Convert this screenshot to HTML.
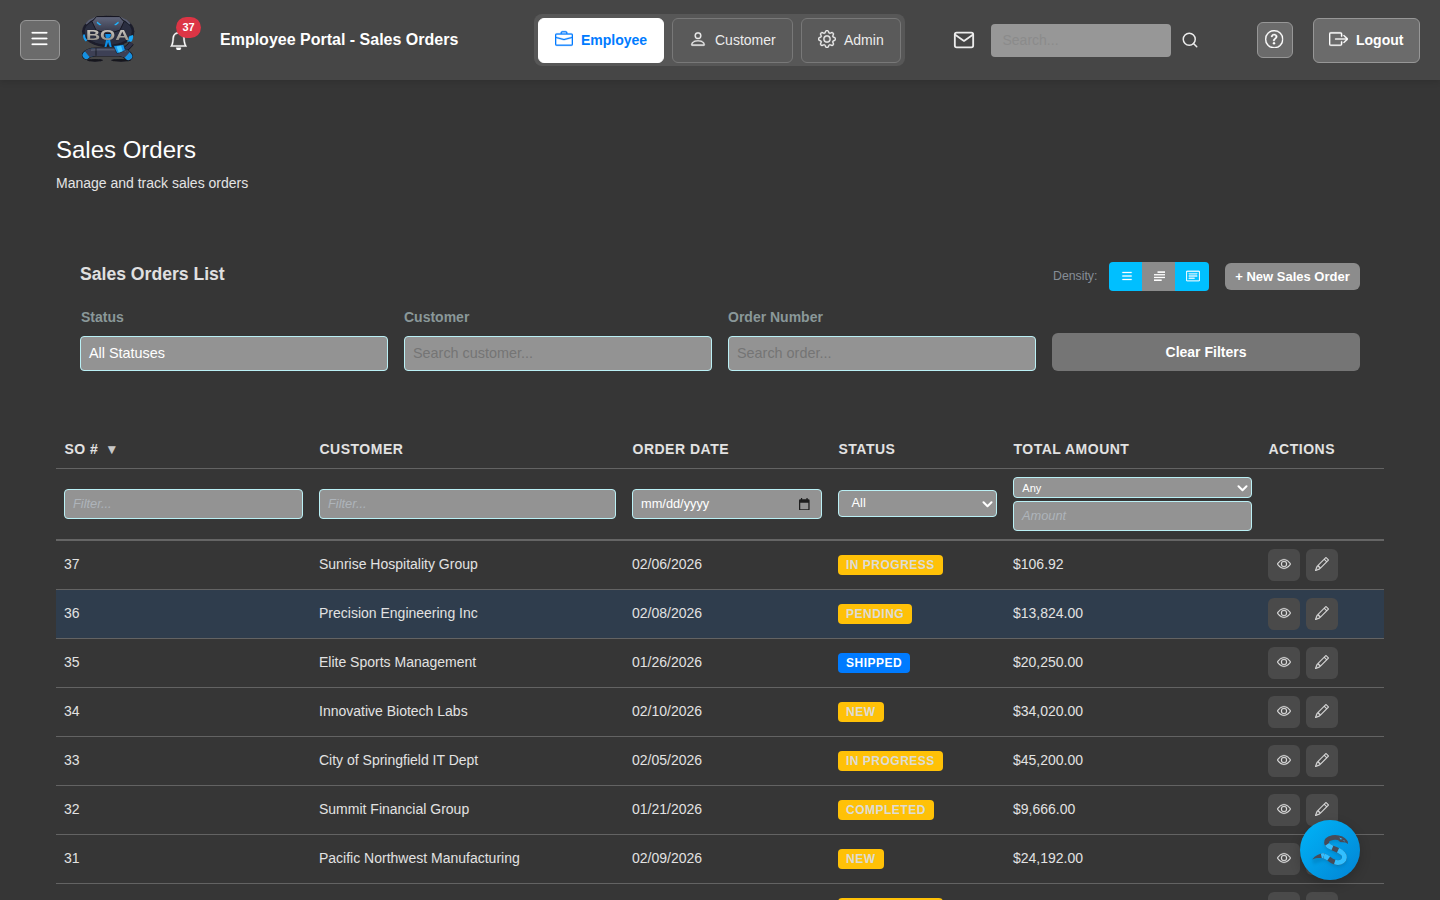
<!DOCTYPE html>
<html lang="en">
<head>
<meta charset="utf-8">
<title>Employee Portal - Sales Orders</title>
<style>
*{box-sizing:border-box;margin:0;padding:0}
html,body{width:1440px;height:900px;overflow:hidden}
body{background:#363636;color:#e8e8e8;font-family:"Liberation Sans",Arial,sans-serif;font-size:14px;position:relative}
.abs{position:absolute}
/* header */
#hdr{position:absolute;left:0;top:0;width:1440px;height:80px;background:#464646;box-shadow:0 2px 6px rgba(0,0,0,.12)}
#menu{left:20px;top:20px;width:40px;height:40px;background:#6b6b6b;border:1px solid #979797;border-radius:6px}

#title{left:220px;top:30px;font-size:16px;font-weight:700;color:#fff;line-height:20px;white-space:nowrap}
#badge{left:176px;top:17px;width:25px;height:21px;border-radius:11px;background:#dc3545;color:#fff;font-size:11px;font-weight:700;text-align:center;line-height:21px}
#tabs{left:534px;top:14px;width:371px;height:52px;background:#575757;border-radius:8px}
.tab{position:absolute;top:4px;height:45px;border:1px solid #787878;border-radius:6px;background:#5a5a5a;color:#ececec;font-size:14px;line-height:43px;white-space:nowrap}
.tab span{position:absolute;top:0}
.tab svg{position:absolute}
#t1{left:4px;width:126px;background:#fff;border-color:#fff;color:#007bff;font-weight:700}
#t2{left:138px;width:121px}
#t3{left:267px;width:100px}
#search{left:991px;top:24px;width:180px;height:33px;background:#979797;border-radius:4px;color:#8b8b8b;font-size:14px;line-height:33px;padding-left:11.500px}
#help{left:1257px;top:22px;width:36px;height:36px;background:#6b6b6b;border:1px solid #979797;border-radius:6px}
#logout{left:1313px;top:18px;width:107px;height:45px;background:#6b6b6b;border:1px solid #979797;border-radius:6px;color:#fff;font-weight:700;font-size:14px;line-height:43px}
#logout span{position:absolute;left:42px;top:0}
/* page */
h1{position:absolute;left:56px;top:134px;font-size:24px;font-weight:400;color:#fff;line-height:32px;white-space:nowrap}
#sub{left:56px;top:174px;font-size:14px;color:#e4e4e4;line-height:18px;white-space:nowrap}
h2{position:absolute;left:80px;top:263px;font-size:17.6px;font-weight:700;color:#e0e0e0;line-height:22px;white-space:nowrap}
#dens{left:1053px;top:268px;font-size:12.3px;color:#868e96;line-height:16px}
#dgrp{left:1109px;top:262px;width:100px;height:29px;border-radius:4px;overflow:hidden;background:#00bfff}
#dgrp b{position:absolute;left:33px;top:0;width:33px;height:29px;background:#8c8c8c}
#new{left:1225px;top:263px;width:135px;height:27px;background:#8c8c8c;border-radius:6px;color:#fff;font-weight:700;font-size:13px;line-height:27px;text-align:center;white-space:nowrap}
.lbl{position:absolute;top:308px;font-size:14px;font-weight:700;color:#8a9899;line-height:18px}
.inp{position:absolute;top:336px;width:308px;height:35px;background:#939393;border:1px solid #baf0f5;border-radius:4px;font-size:14.4px;line-height:32px;padding-left:8px;color:#757575;white-space:nowrap}
#clear{left:1052px;top:333px;width:308px;height:38px;background:#757575;border-radius:6px;color:#fff;font-weight:700;font-size:14px;line-height:38px;text-align:center}
/* table */
table{position:absolute;left:56px;top:430px;width:1328px;border-collapse:separate;border-spacing:0;table-layout:fixed}
th{height:39px;text-align:left;padding:0 8.5px 1px;font-size:14px;font-weight:700;letter-spacing:.5px;color:#e2e2e2;text-transform:uppercase;border-bottom:1px solid #636363;white-space:nowrap}
td{height:49px;padding:0 8px;font-size:14px;color:#e2e2e2;border-bottom:1px solid #636363;white-space:nowrap;vertical-align:top;line-height:47px}
tr.f td{height:72px;border-bottom:2px solid #656565;position:relative;padding:0}
tr.h td{background:#2f3d4d}
.fi{position:absolute;left:8px;right:8px;top:20px;height:30px;background:#939393;border:1px solid #baf0f5;border-radius:4px;font-size:12.8px;line-height:27px;padding-left:8px;color:#aeb4ba;font-style:italic}
.fi.n{font-style:normal;color:#fff}
.bdg{display:inline-block;height:20px;line-height:20px;padding:0 8px;border-radius:4px;font-size:12px;font-weight:700;letter-spacing:.5px;background:#ffc107;color:#dcdcd6;vertical-align:top;margin-top:14px}
.bdg.s{background:#007bff;color:#fff}
.act{display:inline-block;width:32px;height:32px;border-radius:6px;background:#4a4a4a;vertical-align:top;margin:8px 6px 0 0;position:relative}
.act svg{position:absolute;left:9px;top:8px}
#fab{left:1300px;top:820px;width:60px;height:60px;border-radius:50%;background:linear-gradient(135deg,#00b4f8,#0284d4);box-shadow:0 4px 12px rgba(0,0,0,.2)}
</style>
</head>
<body>
<svg width="0" height="0" style="position:absolute"><defs><symbol id="i-list" viewBox="0 0 16 16"><path fill-rule="evenodd" d="M2.5 12a.5.5 0 0 1 .5-.5h10a.5.5 0 0 1 0 1H3a.5.5 0 0 1-.5-.5m0-4a.5.5 0 0 1 .5-.5h10a.5.5 0 0 1 0 1H3a.5.5 0 0 1-.5-.5m0-4a.5.5 0 0 1 .5-.5h10a.5.5 0 0 1 0 1H3a.5.5 0 0 1-.5-.5"/></symbol><symbol id="i-bell" viewBox="0 0 16 16"><path d="M8 16a2 2 0 0 0 2-2H6a2 2 0 0 0 2 2M8 1.918l-.797.161A4 4 0 0 0 4 6c0 .628-.134 2.197-.459 3.742-.16.767-.376 1.566-.663 2.258h10.244c-.287-.692-.502-1.49-.663-2.258C12.134 8.197 12 6.628 12 6a4 4 0 0 0-3.203-3.92zM14.22 12c.223.447.481.801.78 1H1c.299-.199.557-.553.78-1C2.68 10.2 3 6.88 3 6c0-2.42 1.72-4.44 4.005-4.901a1 1 0 1 1 1.99 0A5 5 0 0 1 13 6c0 .88.32 4.2 1.22 6"/></symbol><symbol id="i-briefcase" viewBox="0 0 16 16"><path d="M6.5 1A1.5 1.5 0 0 0 5 2.5V3H1.5A1.5 1.5 0 0 0 0 4.5v8A1.5 1.5 0 0 0 1.5 14h13a1.5 1.5 0 0 0 1.5-1.5v-8A1.5 1.5 0 0 0 14.5 3H11v-.5A1.5 1.5 0 0 0 9.5 1zm0 1h3a.5.5 0 0 1 .5.5V3H6v-.5a.5.5 0 0 1 .5-.5m1.886 6.914L15 7.151V12.5a.5.5 0 0 1-.5.5h-13a.5.5 0 0 1-.5-.5V7.15l6.614 1.764a1.5 1.5 0 0 0 .772 0M1.5 4h13a.5.5 0 0 1 .5.5v1.616L8.129 7.948a.5.5 0 0 1-.258 0L1 6.116V4.5a.5.5 0 0 1 .5-.5"/></symbol><symbol id="i-person" viewBox="0 0 16 16"><path d="M8 8a3 3 0 1 0 0-6 3 3 0 0 0 0 6m2-3a2 2 0 1 1-4 0 2 2 0 0 1 4 0m4 8c0 1-1 1-1 1H3s-1 0-1-1 1-4 6-4 6 3 6 4m-1-.004c-.001-.246-.154-.986-.832-1.664C11.516 10.68 10.289 10 8 10s-3.516.68-4.168 1.332c-.678.678-.83 1.418-.832 1.664z"/></symbol><symbol id="i-gear" viewBox="0 0 16 16"><path d="M8 4.754a3.246 3.246 0 1 0 0 6.492 3.246 3.246 0 0 0 0-6.492M5.754 8a2.246 2.246 0 1 1 4.492 0 2.246 2.246 0 0 1-4.492 0"/><path d="M9.796 1.343c-.527-1.79-3.065-1.79-3.592 0l-.094.319a.873.873 0 0 1-1.255.52l-.292-.16c-1.64-.892-3.433.902-2.54 2.541l.159.292a.873.873 0 0 1-.52 1.255l-.319.094c-1.79.527-1.79 3.065 0 3.592l.319.094a.873.873 0 0 1 .52 1.255l-.16.292c-.892 1.64.901 3.434 2.541 2.54l.292-.159a.873.873 0 0 1 1.255.52l.094.319c.527 1.79 3.065 1.79 3.592 0l.094-.319a.873.873 0 0 1 1.255-.52l.292.16c1.64.893 3.434-.902 2.54-2.541l-.159-.292a.873.873 0 0 1 .52-1.255l.319-.094c1.79-.527 1.79-3.065 0-3.592l-.319-.094a.873.873 0 0 1-.52-1.255l.16-.292c.893-1.64-.902-3.433-2.541-2.54l-.292.159a.873.873 0 0 1-1.255-.52zm-2.633.283c.246-.835 1.428-.835 1.674 0l.094.319a1.873 1.873 0 0 0 2.693 1.115l.291-.16c.764-.415 1.6.42 1.184 1.185l-.159.292a1.873 1.873 0 0 0 1.116 2.692l.318.094c.835.246.835 1.428 0 1.674l-.319.094a1.873 1.873 0 0 0-1.115 2.693l.16.291c.415.764-.42 1.6-1.185 1.184l-.291-.159a1.873 1.873 0 0 0-2.693 1.116l-.094.318c-.246.835-1.428.835-1.674 0l-.094-.319a1.873 1.873 0 0 0-2.692-1.115l-.292.16c-.764.415-1.6-.42-1.184-1.185l.159-.291A1.873 1.873 0 0 0 1.945 8.93l-.319-.094c-.835-.246-.835-1.428 0-1.674l.319-.094A1.873 1.873 0 0 0 3.06 4.377l-.16-.292c-.415-.764.42-1.6 1.185-1.184l.292.159a1.873 1.873 0 0 0 2.692-1.115z"/></symbol><symbol id="i-envelope" viewBox="0 0 16 16"><path d="M0 4a2 2 0 0 1 2-2h12a2 2 0 0 1 2 2v8a2 2 0 0 1-2 2H2a2 2 0 0 1-2-2zm2-1a1 1 0 0 0-1 1v.217l7 4.2 7-4.2V4a1 1 0 0 0-1-1zm13 2.383-4.708 2.825L15 11.105zm-.034 6.876-5.64-3.471L8 9.583l-1.326-.795-5.64 3.47A1 1 0 0 0 2 13h12a1 1 0 0 0 .966-.741M1 11.105l4.708-2.897L1 5.383z"/></symbol><symbol id="i-search" viewBox="0 0 16 16"><path d="M11.742 10.344a6.5 6.5 0 1 0-1.397 1.398h-.001q.044.06.098.115l3.85 3.85a1 1 0 0 0 1.415-1.414l-3.85-3.85a1 1 0 0 0-.115-.1zM12 6.5a5.5 5.5 0 1 1-11 0 5.5 5.5 0 0 1 11 0"/></symbol><symbol id="i-question" viewBox="0 0 16 16"><path d="M8 15A7 7 0 1 1 8 1a7 7 0 0 1 0 14m0 1A8 8 0 1 0 8 0a8 8 0 0 0 0 16"/><path d="M5.255 5.786a.237.237 0 0 0 .241.247h.825c.138 0 .248-.113.266-.25.09-.656.54-1.134 1.342-1.134.686 0 1.314.343 1.314 1.168 0 .635-.374.927-.965 1.371-.673.489-1.206 1.06-1.168 1.987l.003.217a.25.25 0 0 0 .25.246h.811a.25.25 0 0 0 .25-.25v-.105c0-.718.273-.927 1.01-1.486.609-.463 1.244-.977 1.244-2.056 0-1.511-1.276-2.241-2.673-2.241-1.267 0-2.655.59-2.75 2.286m1.557 5.763c0 .533.425.927 1.01.927.609 0 1.028-.394 1.028-.927 0-.552-.42-.94-1.029-.94-.584 0-1.009.388-1.009.94"/></symbol><symbol id="i-eye" viewBox="0 0 16 16"><path d="M16 8s-3-5.500-8-5.500S0 8 0 8s3 5.500 8 5.500S16 8 16 8M1.173 8a13 13 0 0 1 1.660-2.043C4.120 4.668 5.880 3.500 8 3.500s3.879 1.168 5.168 2.457A13 13 0 0 1 14.828 8q-.086.130-.195.288c-.335.480-.830 1.120-1.465 1.755C11.879 11.332 10.119 12.500 8 12.500s-3.879-1.168-5.168-2.457A13 13 0 0 1 1.172 8z"/><path d="M8 5.500a2.500 2.500 0 1 0 0 5 2.500 2.500 0 0 0 0-5M4.500 8a3.500 3.500 0 1 1 7 0 3.500 3.500 0 0 1-7 0"/></symbol><symbol id="i-pencil" viewBox="0 0 16 16"><path d="M12.146.146a.5.5 0 0 1 .708 0l3 3a.5.5 0 0 1 0 .708l-10 10a.5.5 0 0 1-.168.110l-5 2a.5.5 0 0 1-.650-.650l2-5a.5.5 0 0 1 .110-.168zM11.207 2.500 13.500 4.793 14.793 3.500 12.500 1.207zm1.586 3L10.500 3.207 4 9.707V10h.5a.5.5 0 0 1 .5.5v.5h.5a.5.5 0 0 1 .5.5v.5h.293zm-9.761 5.175-.106.106-1.528 3.821 3.821-1.528.106-.106A.5.5 0 0 1 5 12.500V12h-.5a.5.5 0 0 1-.5-.5V11h-.5a.5.5 0 0 1-.468-.325"/></symbol><symbol id="i-card" viewBox="0 0 16 16"><path d="M14.500 3a.5.5 0 0 1 .5.5v9a.5.5 0 0 1-.5.5h-13a.5.5 0 0 1-.5-.5v-9a.5.5 0 0 1 .5-.5zm-13-1A1.500 1.500 0 0 0 0 3.500v9A1.500 1.500 0 0 0 1.500 14h13a1.500 1.500 0 0 0 1.500-1.500v-9A1.500 1.500 0 0 0 14.500 2z"/><path d="M3 5.500a.5.5 0 0 1 .5-.5h9a.5.5 0 0 1 0 1h-9a.5.5 0 0 1-.5-.5M3 8a.5.5 0 0 1 .5-.5h9a.5.5 0 0 1 0 1h-9A.5.5 0 0 1 3 8m0 2.500a.5.5 0 0 1 .5-.5h6a.5.5 0 0 1 0 1h-6a.5.5 0 0 1-.5-.5"/></symbol></defs></svg>
<div id="hdr">
  <div id="menu" class="abs"><svg class="abs" style="left:7px;top:6px;" width="23" height="23" fill="#fff" stroke="#fff" stroke-width=".2"><use href="#i-list"/></svg></div>
  <svg id="logo" class="abs" style="left:78px;top:12px" width="60" height="54" viewBox="78 12 60 54">
<defs>
<linearGradient id="lg1" x1="0" y1="0" x2="0" y2="1"><stop offset="0" stop-color="#62677c"/><stop offset="1" stop-color="#303344"/></linearGradient>
<linearGradient id="lg2" x1="0" y1="0" x2="0" y2="1"><stop offset="0" stop-color="#d6d3ce"/><stop offset=".5" stop-color="#b4b0a9"/><stop offset="1" stop-color="#85817b"/></linearGradient>
<filter id="lb" x="-20%" y="-20%" width="140%" height="140%"><feGaussianBlur stdDeviation=".45"/></filter>
</defs>
<g filter="url(#lb)">
<ellipse cx="95" cy="60.300" rx="8" ry="1.400" fill="#14151f"/>
<ellipse cx="121" cy="60.300" rx="10" ry="1.400" fill="#14151f"/>
<ellipse cx="108.200" cy="31.400" rx="26.200" ry="15.700" fill="#1b1d2b"/>
<ellipse cx="108.200" cy="31.400" rx="23.500" ry="13.300" fill="#2c2f40"/>
<path d="M86 24c3-3.500 7-5.500 10-6.500M130 24c-3-3.500-7-5.500-10-6.500" stroke="#5a5e72" stroke-width="1.600" fill="none"/>
<path d="M96.500 16.600h23l4.500 5-4 8.500-12 3.800-12-3.800-4-8.500z" fill="url(#lg1)" stroke="#15161f" stroke-width="1"/>
<path d="M97.200 21.600l4.300 3.300-2 .4-2.800-2.200z" fill="#21b4ff"/>
<path d="M118.300 21.600l-4.300 3.300 2 .4 2.800-2.200z" fill="#21b4ff"/>
<path d="M83.200 34.500c-.6 2.300.4 5 2.600 7l1.600-1.300c-1.700-1.700-2.500-3.900-2.200-5.700z" fill="#1a9cf0"/>
<path d="M129.500 36l3.500-1c.5 2.400-.2 5-1.700 6.800l-4.300-.4z" fill="#19a8f8"/>
<path d="M105.300 34h5.600l-.7 6.500 1.500 6.500h-1.900l-1.700-5-1.700 5h-1.900l1.500-6.500z" fill="#0f8fe8"/>
<path d="M119 52c5-1.500 9.500-4.500 12.500-9" stroke="#15161f" stroke-width="5.400" fill="none"/>
<path d="M119 52c5-1.500 9.500-4.500 12.500-9" stroke="#30334a" stroke-width="4" fill="none"/>
<path d="M86.400 55.200Q89 52 96 52L119 52Q125.500 52.300 128.400 56.200" stroke="#15161f" stroke-width="9" stroke-linecap="round" fill="none"/>
<path d="M86.400 55.200Q89 52 96 52L119 52Q125.500 52.300 128.400 56.200" stroke="#1790e0" stroke-width="7.600" stroke-linecap="round" fill="none"/>
<path d="M86.400 55.200Q89 52 96 52L119 52Q125.500 52.300 128.400 56.200" pathLength="100" stroke-dasharray="0 3 93 4" stroke="#3c4054" stroke-width="7.800" fill="none"/>
<path d="M91 50.200Q93.500 49.700 96 49.700L119 49.700Q123 49.800 126 51.200" stroke="#555a6e" stroke-width="1.500" fill="none"/>
<path d="M113.400 45.800l10.200-1.400 1.800 6-8.400 3.200z" fill="#1496ee" stroke="#15161f" stroke-width=".6"/>
<path d="M116.500 46.600l4.600-.8 1.600 5.400-4 1.500z" fill="#45c6ff"/>
<path d="M96 48.200v7.600" stroke="#15161f" stroke-width=".8"/>
</g>
<text x="107.700" y="39.900" text-anchor="middle" textLength="43.500" lengthAdjust="spacingAndGlyphs" font-family="'Liberation Sans',Arial,sans-serif" font-weight="700" font-size="15" fill="url(#lg2)" stroke="#2a2a30" stroke-width=".35" paint-order="stroke" filter="url(#lb)">BOA</text>
</svg>
  <svg class="abs" style="left:168.7px;top:30.7px;" width="19.2" height="19.2" fill="#fff" stroke="#fff" stroke-width=".35"><use href="#i-bell"/></svg>
  <div id="badge" class="abs">37</div>
  <div id="title" class="abs">Employee Portal - Sales Orders</div>
  <div id="tabs" class="abs">
    <div class="tab" id="t1"><svg class="abs" style="left:16px;top:10.500px;" width="18" height="18" fill="#007bff" stroke="#007bff" stroke-width=".3"><use href="#i-briefcase"/></svg><span style="left:42px">Employee</span></div>
    <div class="tab" id="t2"><svg class="abs" style="left:16.300px;top:10.500px;" width="18" height="18" fill="#ececec" stroke="#ececec" stroke-width=".3"><use href="#i-person"/></svg><span style="left:42px">Customer</span></div>
    <div class="tab" id="t3"><svg class="abs" style="left:16px;top:10.500px;" width="18" height="18" fill="#ececec" stroke="#ececec" stroke-width=".3"><use href="#i-gear"/></svg><span style="left:42px">Admin</span></div>
  </div>
  <svg class="abs" style="left:953px;top:29px" width="22" height="22" viewBox="0 0 24 24" fill="none" stroke="#ececec" stroke-width="2" stroke-linecap="round" stroke-linejoin="round"><path d="M4 4h16c1.100 0 2 .9 2 2v12c0 1.100-.9 2-2 2H4c-1.100 0-2-.9-2-2V6c0-1.100.9-2 2-2z"/><polyline points="22,6 12,13 2,6"/></svg>
  <div id="search" class="abs">Search...</div>
  <svg class="abs" style="left:1181px;top:31px" width="18" height="18" viewBox="0 0 24 24" fill="none" stroke="#ececec" stroke-width="2" stroke-linecap="round" stroke-linejoin="round"><circle cx="11" cy="11" r="8"/><line x1="21" y1="21" x2="16.650" y2="16.650"/></svg>
  <div id="help" class="abs"><svg class="abs" style="left:7.300px;top:7px;" width="18.400" height="18.400" fill="#fff" stroke="#fff" stroke-width=".3"><use href="#i-question"/></svg></div>
  <div id="logout" class="abs"><svg class="abs" style="left:14.800px;top:11px;" width="19.200" height="18" viewBox="0 0 16 16" preserveAspectRatio="none" fill="#fff" stroke="#fff" stroke-width=".3"><path fill-rule="evenodd" d="M10 12.5a.5.5 0 0 1-.5.5h-8a.5.5 0 0 1-.5-.5v-9a.5.5 0 0 1 .5-.5h8a.5.5 0 0 1 .5.5v2a.5.5 0 0 0 1 0v-2A1.5 1.5 0 0 0 9.500 2h-8A1.500 1.500 0 0 0 0 3.500v9A1.500 1.500 0 0 0 1.500 14h8a1.500 1.500 0 0 0 1.500-1.500v-2a.5.5 0 0 0-1 0z"/><path fill-rule="evenodd" d="M15.854 8.354a.5.5 0 0 0 0-.708l-3-3a.5.5 0 0 0-.708.708L14.293 7.500H5.500a.5.5 0 0 0 0 1h8.793l-2.147 2.146a.5.5 0 0 0 .708.708z"/></svg><span>Logout</span></div>
</div>
<h1>Sales Orders</h1>
<div id="sub" class="abs">Manage and track sales orders</div>
<h2>Sales Orders List</h2>
<div id="dens" class="abs">Density:</div>
<div id="dgrp" class="abs"><b></b><svg class="abs" style="left:11px;top:7px" width="14" height="14" fill="#fff" stroke="#fff" stroke-width=".35"><use href="#i-list"/></svg><svg class="abs" style="left:44px;top:8px" width="14" height="14" viewBox="44 8 14 14" fill="#fff"><rect x="48.500" y="9.300" width="7.500" height="1.600"/><rect x="45" y="12.100" width="11" height="1.300"/><rect x="45" y="14.800" width="11" height="1.300"/><rect x="45" y="17.400" width="7.700" height="1.600"/></svg><svg class="abs" style="left:77px;top:7px" width="14" height="14" fill="#fff" stroke="#fff" stroke-width=".3"><use href="#i-card"/></svg></div>
<div id="new" class="abs">+ New Sales Order</div>
<div class="lbl" style="left:81px">Status</div>
<div class="lbl" style="left:404px">Customer</div>
<div class="lbl" style="left:728px">Order Number</div>
<div class="inp" style="left:80px;color:#fff">All Statuses</div>
<div class="inp" style="left:404px">Search customer...</div>
<div class="inp" style="left:728px">Search order...</div>
<div id="clear" class="abs">Clear Filters</div>
<table>
<colgroup><col style="width:255px"><col style="width:313px"><col style="width:206px"><col style="width:175px"><col style="width:255px"><col style="width:124px"></colgroup>
<thead>
<tr><th>SO # <span style="font-family:'DejaVu Sans',sans-serif;font-size:10.5px;margin-left:5px;color:#c8c8c8;letter-spacing:0;position:relative;top:-.5px">▼</span></th><th>Customer</th><th>Order Date</th><th>Status</th><th>Total Amount</th><th>Actions</th></tr>
</thead>
<tbody>
<tr class="f"><td><div class="fi">Filter...</div></td><td><div class="fi">Filter...</div></td><td><div class="fi n">mm/dd/yyyy<svg class="abs" style="left:166.300px;top:7.800px" width="10.600" height="12.400" viewBox="0 0 11 13" preserveAspectRatio="none" fill="#1e1e1e"><path d="M2 0h1.300v1.300h4.400V0H9v1.300h.8A1.200 1.200 0 0 1 11 2.500v9.300A1.200 1.200 0 0 1 9.800 13H1.200A1.200 1.200 0 0 1 0 11.800V2.500a1.200 1.200 0 0 1 1.200-1.200H2zM1.300 5v6.700h8.400V5z"/></svg></div></td><td><div class="fi n" style="height:27px;line-height:24px;padding-left:12.5px;top:21px">All<svg class="abs" style="right:3px;top:9.5px" width="11" height="7" viewBox="0 0 11 7" fill="none" stroke="#fff" stroke-width="2" stroke-linecap="round" stroke-linejoin="round"><path d="M1.500 1.300 5.500 5.300 9.500 1.300"/></svg></div></td><td><div class="fi n" style="height:21px;line-height:21px;font-size:11px;padding-left:8.300px;top:8px">Any<svg class="abs" style="right:3px;top:6.5px" width="11" height="7" viewBox="0 0 11 7" fill="none" stroke="#fff" stroke-width="2" stroke-linecap="round" stroke-linejoin="round"><path d="M1.500 1.300 5.500 5.300 9.500 1.300"/></svg></div><div class="fi" style="top:32px">Amount</div></td><td></td></tr>
<tr><td>37</td><td>Sunrise Hospitality Group</td><td>02/06/2026</td><td><span class="bdg">IN PROGRESS</span></td><td>$106.92</td><td><span class="act"><svg width="14" height="14" fill="#e4e4e4" stroke="#e4e4e4" stroke-width=".3"><use href="#i-eye"/></svg></span><span class="act"><svg width="14" height="14" fill="#e4e4e4" stroke="#e4e4e4" stroke-width=".3"><use href="#i-pencil"/></svg></span></td></tr>
<tr class="h"><td>36</td><td>Precision Engineering Inc</td><td>02/08/2026</td><td><span class="bdg">PENDING</span></td><td>$13,824.00</td><td><span class="act"><svg width="14" height="14" fill="#e4e4e4" stroke="#e4e4e4" stroke-width=".3"><use href="#i-eye"/></svg></span><span class="act"><svg width="14" height="14" fill="#e4e4e4" stroke="#e4e4e4" stroke-width=".3"><use href="#i-pencil"/></svg></span></td></tr>
<tr><td>35</td><td>Elite Sports Management</td><td>01/26/2026</td><td><span class="bdg s">SHIPPED</span></td><td>$20,250.00</td><td><span class="act"><svg width="14" height="14" fill="#e4e4e4" stroke="#e4e4e4" stroke-width=".3"><use href="#i-eye"/></svg></span><span class="act"><svg width="14" height="14" fill="#e4e4e4" stroke="#e4e4e4" stroke-width=".3"><use href="#i-pencil"/></svg></span></td></tr>
<tr><td>34</td><td>Innovative Biotech Labs</td><td>02/10/2026</td><td><span class="bdg">NEW</span></td><td>$34,020.00</td><td><span class="act"><svg width="14" height="14" fill="#e4e4e4" stroke="#e4e4e4" stroke-width=".3"><use href="#i-eye"/></svg></span><span class="act"><svg width="14" height="14" fill="#e4e4e4" stroke="#e4e4e4" stroke-width=".3"><use href="#i-pencil"/></svg></span></td></tr>
<tr><td>33</td><td>City of Springfield IT Dept</td><td>02/05/2026</td><td><span class="bdg">IN PROGRESS</span></td><td>$45,200.00</td><td><span class="act"><svg width="14" height="14" fill="#e4e4e4" stroke="#e4e4e4" stroke-width=".3"><use href="#i-eye"/></svg></span><span class="act"><svg width="14" height="14" fill="#e4e4e4" stroke="#e4e4e4" stroke-width=".3"><use href="#i-pencil"/></svg></span></td></tr>
<tr><td>32</td><td>Summit Financial Group</td><td>01/21/2026</td><td><span class="bdg">COMPLETED</span></td><td>$9,666.00</td><td><span class="act"><svg width="14" height="14" fill="#e4e4e4" stroke="#e4e4e4" stroke-width=".3"><use href="#i-eye"/></svg></span><span class="act"><svg width="14" height="14" fill="#e4e4e4" stroke="#e4e4e4" stroke-width=".3"><use href="#i-pencil"/></svg></span></td></tr>
<tr><td>31</td><td>Pacific Northwest Manufacturing</td><td>02/09/2026</td><td><span class="bdg">NEW</span></td><td>$24,192.00</td><td><span class="act"><svg width="14" height="14" fill="#e4e4e4" stroke="#e4e4e4" stroke-width=".3"><use href="#i-eye"/></svg></span><span class="act"><svg width="14" height="14" fill="#e4e4e4" stroke="#e4e4e4" stroke-width=".3"><use href="#i-pencil"/></svg></span></td></tr>
<tr><td></td><td></td><td></td><td><span class="bdg">IN PROGRESS</span></td><td></td><td><span class="act"><svg width="14" height="14" fill="#e4e4e4" stroke="#e4e4e4" stroke-width=".3"><use href="#i-eye"/></svg></span><span class="act"><svg width="14" height="14" fill="#e4e4e4" stroke="#e4e4e4" stroke-width=".3"><use href="#i-pencil"/></svg></span></td></tr>
</tbody>
</table>
<div id="fab" class="abs"><svg width="60" height="60" viewBox="0 0 60 60" style="position:absolute;left:0;top:0">
<defs><filter id="fb" x="-20%" y="-20%" width="140%" height="140%"><feGaussianBlur stdDeviation=".35"/></filter>
<filter id="fs" x="-30%" y="-30%" width="160%" height="160%"><feGaussianBlur stdDeviation="1.600"/></filter></defs>
<path d="M41.500 19C38 17.200 35 17.100 32.600 17.600C29 18.400 26.200 20.200 26.500 22.700C26.800 25 29 26.500 31 27.300C35 28.900 40 30.600 43 33.600C45.300 36 44.800 39.300 42.500 41.100C40 43 36 42.900 33 41.400C29.500 39.600 27 36.600 23.700 35.800L12.200 39.300" fill="none" stroke="#04699f" stroke-width="5" opacity=".35" transform="translate(.5 2.200)" filter="url(#fs)"/>
<g filter="url(#fb)">
<path d="M41.500 19C38 17.200 35 17.100 32.600 17.600C29 18.400 26.200 20.200 26.500 22.700C26.800 25 29 26.500 31 27.300C35 28.900 40 30.600 43 33.600C45.300 36 44.800 39.300 42.500 41.100C40 43 36 42.900 33 41.400C29.500 39.600 27 36.600 23.700 35.800" fill="none" stroke="#474b59" stroke-width="4.800"/>
<path d="M41.500 19C38 17.200 35 17.100 32.600 17.600C29 18.400 26.200 20.200 26.500 22.700C26.800 25 29 26.500 31 27.300C35 28.900 40 30.600 43 33.600C45.300 36 44.800 39.300 42.500 41.100C40 43 36 42.900 33 41.400C29.500 39.600 27 36.600 23.700 35.800" fill="none" stroke="#33bfff" stroke-width="4.800" stroke-dasharray="0 19.500 6.500 6 22.500 7 100"/>
<path d="M24.600 33.400C20 33 15.500 35.600 12.200 39.400C16 37.800 20 37.600 23.200 38.300z" fill="#474b59"/>
<path d="M24.600 33.400C23.300 33.300 22 33.400 20.800 33.700L21.800 37.900C22.300 38 22.800 38.100 23.200 38.300z" fill="#33bfff"/>
<path d="M35.500 16.400C40.500 15 45.500 17.300 47.800 21.400L48 24L45.600 22.600L40 22z" fill="#474b59"/>
<path d="M39.300 17.400l3.400 1.500-2.200.6zM42.600 20.300l2.300.5-.4.800z" fill="#33bfff"/>
</g>
</svg></div>
</body>
</html>
